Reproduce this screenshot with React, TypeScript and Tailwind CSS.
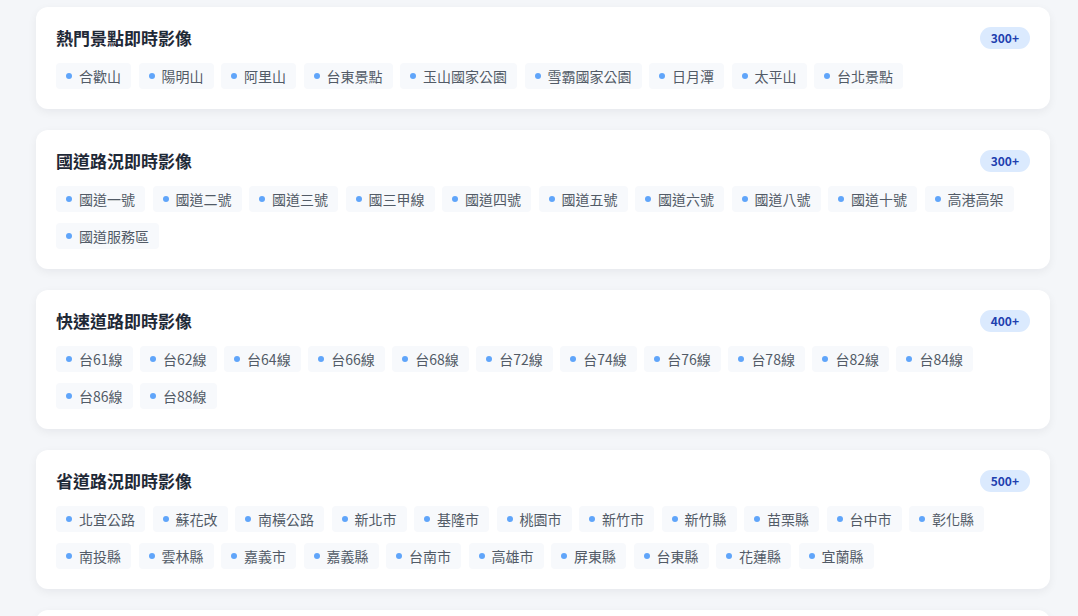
import React from 'react'

interface Section {
  title: string
  count: string
  items: string[]
}

const sections: Section[] = [
  {
    title: '熱門景點即時影像',
    count: '300+',
    items: ['合歡山', '陽明山', '阿里山', '台東景點', '玉山國家公園', '雪霸國家公園', '日月潭', '太平山', '台北景點'],
  },
  {
    title: '國道路況即時影像',
    count: '300+',
    items: ['國道一號', '國道二號', '國道三號', '國三甲線', '國道四號', '國道五號', '國道六號', '國道八號', '國道十號', '高港高架', '國道服務區'],
  },
  {
    title: '快速道路即時影像',
    count: '400+',
    items: ['台61線', '台62線', '台64線', '台66線', '台68線', '台72線', '台74線', '台76線', '台78線', '台82線', '台84線', '台86線', '台88線'],
  },
  {
    title: '省道路況即時影像',
    count: '500+',
    items: [
      '北宜公路', '蘇花改', '南橫公路', '新北市', '基隆市', '桃園市', '新竹市', '新竹縣', '苗栗縣', '台中市', '彰化縣',
      '南投縣', '雲林縣', '嘉義市', '嘉義縣', '台南市', '高雄市', '屏東縣', '台東縣', '花蓮縣', '宜蘭縣',
    ],
  },
  {
    title: '市區路況即時影像',
    count: '200+',
    items: ['台北市', '新北市', '桃園市', '台中市', '台南市', '高雄市'],
  },
]

function Chip({ label }: { label: string }) {
  return (
    <div className="h-[26px] flex items-center gap-[7px] px-[10px] rounded bg-[#f7f9fc] text-[14px] leading-5 text-[#525b67]">
      <span className="w-[6px] h-[6px] rounded-full bg-[#60a5fa]" />
      {label}
    </div>
  )
}

export default function App() {
  return (
    <div
      className="min-h-screen bg-[#f4f6f9] pt-[7px] pb-10"
      style={{ fontFamily: '"Noto Sans CJK TC", "Noto Sans", sans-serif' }}
    >
      <div className="ml-[36px] w-[1014px] flex flex-col gap-[21px]">
        {sections.map(section => (
          <div
            key={section.title}
            className="bg-white rounded-xl px-5 pt-5 pb-5 shadow-[0_3px_10px_rgba(15,23,42,0.06)]"
          >
            <div className="flex items-center justify-between h-[22px] mb-[14px]">
              <h2 className="text-[17px] font-bold text-[#1f2937] leading-[22px]">{section.title}</h2>
              <span className="h-[22px] px-[11px] flex items-center rounded-full bg-[#dbeafe] text-[12px] font-bold text-[#1e40af]">
                {section.count}
              </span>
            </div>
            <div className="flex flex-wrap gap-x-[7.5px] gap-y-[11px]">
              {section.items.map(item => (
                <Chip key={item} label={item} />
              ))}
            </div>
          </div>
        ))}
      </div>
    </div>
  )
}
